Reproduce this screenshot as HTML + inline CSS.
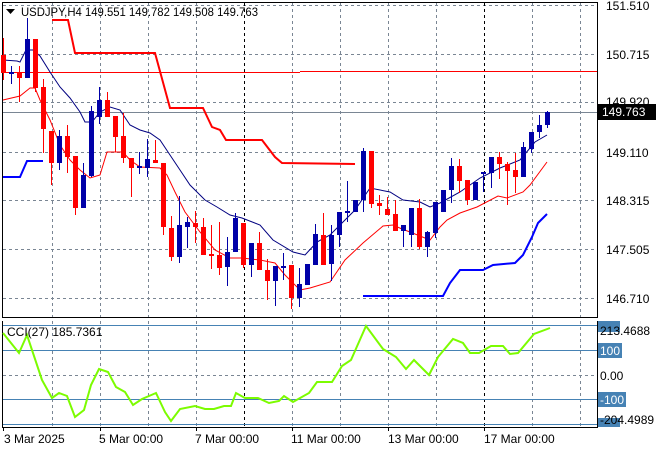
<!DOCTYPE html>
<html><head><meta charset="utf-8"><style>
html,body{margin:0;padding:0;background:#fff;width:660px;height:450px;overflow:hidden}
svg{display:block;font-family:"Liberation Sans",sans-serif;font-size:12px}
</style></head><body>
<svg width="660" height="450" viewBox="0 0 660 450" xmlns="http://www.w3.org/2000/svg">
<rect width="660" height="450" fill="#fff"/>
<g stroke="#7a8694" stroke-width="1" stroke-dasharray="3,3" fill="none">
<path d="M3 5.5H597M3 54.5H597M3 102.5H597M3 152.5H597M3 200.5H597M3 249.5H597M3 298.5H597"/>
<path d="M52.5 3V317M100.5 3V317M148.5 3V317M196.5 3V317M292.5 3V317M340.5 3V317M388.5 3V317M436.5 3V317M532.5 3V317M580.5 3V317"/>
<path d="M52.5 321V427M100.5 321V427M148.5 321V427M196.5 321V427M292.5 321V427M340.5 321V427M388.5 321V427M436.5 321V427M532.5 321V427M580.5 321V427M3 375.5H597"/>
</g>
<g stroke="#000" stroke-dasharray="3,3"><path d="M244.5 3V317M484.5 3V317M244.5 321V427M484.5 321V427"/></g>
<g stroke="#000" fill="none"><path d="M2.5 2V317.5H597.5V2M2.5 321V427.5H597.5V321"/><path d="M2.5 2.5H597"/></g>
<path d="M3 72.5H300M300 71.5H597" stroke="#f00" fill="none"/>
<path d="M3 112.5H597" stroke="#7a8694"/>
<polyline fill="none" stroke="#f00" stroke-width="2" points="52,20 68,20 75,53 155,53 170,108 203,108 212,127 220,130 226,140 262,140 275,157 282,163 355,164"/>
<polyline fill="none" stroke="#0000ff" stroke-width="2" points="3,177 20,177 27,161 43,161"/>
<polyline fill="none" stroke="#0000ff" stroke-width="2" points="363,296 443,296 450,283 460,270 483,270 493,265 515,263 523,255 532,237 538,223 547,214"/>
<polyline fill="none" stroke="#000080" points="3,60 17,61 20,62 26,50 33,50 40,56 50,72 60,87 70,98 80,112 85,122 92,122 100,112 110,107 120,110 130,125 140,130 150,133 160,140 168,152 180,170 190,185 205,200 217,207 230,215 242,218 260,225 273,240 293,252 305,255 317,242 330,235 345,220 355,210 370,188 390,192 403,200 420,202 430,207 440,203 460,192 480,178 500,168 520,160 535,142 547,135"/>
<polyline fill="none" stroke="#f00" points="3,100 20,96 30,88 35,88 40,100 50,120 60,145 70,160 80,170 90,178 100,175 107,152 123,152 130,160 140,167 160,168 167,175 175,192 185,212 200,232 215,250 230,258 242,258 260,260 275,263 285,275 300,290 310,288 330,282 345,260 363,243 383,226 393,225 402,229 410,232 420,236 430,240 440,227 447,220 460,213 477,207 498,196 507,198 523,192 530,185 547,162"/>
<g>
<g stroke="#f00" fill="#f00">
<path d="M3.5 38V80M19.5 66V102M35.5 39V92M43.5 79V153M51.5 131V185M67.5 125V173M75.5 156V215M107.5 92V117M115.5 116V152M123.5 113V163M131.5 158V197M155.5 140V163M163.5 163V235M171.5 216V261M195.5 211V243M203.5 218V252M211.5 225V269M219.5 222V275M243.5 223V268M259.5 232V270M267.5 259V300M291.5 265V309M323.5 213V265M371.5 151V208M379.5 195V215M387.5 197V215M395.5 200V231M419.5 199V249M459.5 159V193M467.5 180V205M499.5 152V179M507.5 162V205M515.5 153V193"/>
</g>
<g fill="#f00">
<rect x="1" y="55" width="5" height="18"/><rect x="17" y="73" width="5" height="5"/><rect x="33" y="39" width="5" height="49"/><rect x="41" y="87" width="5" height="42"/><rect x="49" y="131" width="5" height="32"/><rect x="65" y="136" width="5" height="21"/><rect x="73" y="156" width="5" height="52"/><rect x="105" y="100" width="5" height="17"/><rect x="113" y="116" width="5" height="21"/><rect x="121" y="136" width="5" height="22"/><rect x="129" y="158" width="5" height="10"/><rect x="153" y="160" width="5" height="3"/><rect x="161" y="163" width="5" height="64"/><rect x="169" y="228" width="5" height="29"/><rect x="193" y="223" width="5" height="4"/><rect x="201" y="227" width="5" height="28"/><rect x="209" y="254" width="5" height="2"/><rect x="217" y="255" width="5" height="13"/><rect x="241" y="223" width="5" height="42"/><rect x="257" y="243" width="5" height="27"/><rect x="265" y="270" width="5" height="11"/><rect x="289" y="265" width="5" height="33"/><rect x="321" y="235" width="5" height="30"/><rect x="369" y="151" width="5" height="53"/><rect x="377" y="203" width="5" height="3"/><rect x="385" y="209" width="5" height="6"/><rect x="393" y="214" width="5" height="17"/><rect x="417" y="208" width="5" height="39"/><rect x="457" y="166" width="5" height="15"/><rect x="465" y="180" width="5" height="20"/><rect x="497" y="157" width="5" height="7"/><rect x="505" y="164" width="5" height="7"/><rect x="513" y="170" width="5" height="7"/>
</g>
<g stroke="#0000a8">
<path d="M11.5 66V84M27.5 18V78M59.5 130V170M83.5 163V208M91.5 106V177M99.5 87V124M139.5 152V174M147.5 139V177M179.5 196V263M187.5 217V248M227.5 237V286M235.5 213V252M251.5 243V277M275.5 266V306M283.5 253V280M299.5 268V307M307.5 264V285M315.5 224V265M331.5 225V281M339.5 212V247M347.5 181V222M355.5 200V212M363.5 148V212M403.5 225V247M411.5 208V247M427.5 231V257M435.5 202V238M443.5 190V212M451.5 158V203M475.5 182V200M483.5 173V192M491.5 157V188M523.5 142V177M531.5 132V153M539.5 115V138M547.5 111V128"/>
</g>
<g fill="#0000a8">
<rect x="9" y="72" width="5" height="2"/><rect x="25" y="39" width="5" height="39"/><rect x="57" y="136" width="5" height="27"/><rect x="81" y="175" width="5" height="33"/><rect x="89" y="111" width="5" height="65"/><rect x="97" y="100" width="5" height="17"/><rect x="137" y="166" width="5" height="2"/><rect x="145" y="159" width="5" height="9"/><rect x="177" y="225" width="5" height="32"/><rect x="185" y="222" width="5" height="5"/><rect x="225" y="252" width="5" height="15"/><rect x="233" y="218" width="5" height="34"/><rect x="249" y="243" width="5" height="22"/><rect x="273" y="266" width="5" height="15"/><rect x="281" y="266" width="5" height="2"/><rect x="297" y="284" width="5" height="14"/><rect x="305" y="264" width="5" height="21"/><rect x="313" y="234" width="5" height="31"/><rect x="329" y="235" width="5" height="29"/><rect x="337" y="212" width="5" height="23"/><rect x="345" y="211" width="5" height="2"/><rect x="353" y="200" width="5" height="12"/><rect x="361" y="151" width="5" height="49"/><rect x="401" y="225" width="5" height="6"/><rect x="409" y="208" width="5" height="27"/><rect x="425" y="232" width="5" height="15"/><rect x="433" y="202" width="5" height="31"/><rect x="441" y="190" width="5" height="22"/><rect x="449" y="166" width="5" height="24"/><rect x="473" y="182" width="5" height="18"/><rect x="481" y="172" width="5" height="2"/><rect x="489" y="157" width="5" height="16"/><rect x="521" y="147" width="5" height="30"/><rect x="529" y="132" width="5" height="17"/><rect x="537" y="125" width="5" height="7"/><rect x="545" y="112" width="5" height="13"/>
</g>
</g>
<path d="M6 9h9l-4.5 5z" fill="#000"/>
<text x="21" y="16" fill="#000" textLength="237" lengthAdjust="spacingAndGlyphs">USDJPY,H4  149.551 149.782 149.508 149.763</text>
<g fill="#000">
<text x="606" y="10">151.510</text>
<text x="606" y="59">150.715</text>
<text x="606" y="106">149.920</text>
<text x="606" y="157">149.110</text>
<text x="606" y="205">148.315</text>
<text x="606" y="254">147.505</text>
<text x="606" y="303">146.710</text>
</g>
<rect x="598" y="104" width="58" height="16" fill="#000"/>
<text x="602" y="116" fill="#fff">149.763</text>
<g stroke="#4682b4"><path d="M3 325.5H597M3 350.5H597M3 399.5H597M3 424.5H597"/></g>
<polyline fill="none" stroke="#7cfc00" stroke-width="2" points="3,333 19,353 27,335 42,380 52,398 59,393 67,396 75,417 84,410 91,385 99,369 108,372 116,387 125,392 133,405 142,399 156,393 165,412 171,421 180,409 195,406 205,409 214,409 224,406 231,406 236,393 245,398 258,398 269,403 279,401 284,396 293,402 309,393 317,382 332,382 342,366 351,360 366,326 383,349 396,357 406,369 414,360 429,375 438,357 453,339 463,343 470,353 479,353 491,346 503,346 510,354 518,353 534,334 550,328"/>
<text x="7" y="336" fill="#000">CCI(27) 185.7361</text>
<rect x="598" y="321" width="22" height="11" fill="#4682b4"/>
<text x="600" y="335" fill="#000">213.4688</text>
<rect x="598" y="343" width="24" height="15" fill="#4682b4"/>
<text x="600" y="355" fill="#fff">100</text>
<text x="600" y="380" fill="#000">0.00</text>
<rect x="598" y="392" width="28" height="15" fill="#4682b4"/>
<text x="600" y="404" fill="#fff">-100</text>
<rect x="598" y="418" width="22" height="9" fill="#4682b4"/>
<text x="600" y="424" fill="#000">-204.4989</text>
<g stroke="#000"><path d="M3.5 427V431M100.5 427V431M196.5 427V431M292.5 427V431M388.5 427V431M484.5 427V431"/></g>
<g fill="#000">
<text x="4" y="443">3 Mar 2025</text>
<text x="99" y="443">5 Mar 00:00</text>
<text x="195" y="443">7 Mar 00:00</text>
<text x="291" y="443">11 Mar 00:00</text>
<text x="388" y="443">13 Mar 00:00</text>
<text x="484" y="443">17 Mar 00:00</text>
</g>
</svg>
</body></html>
